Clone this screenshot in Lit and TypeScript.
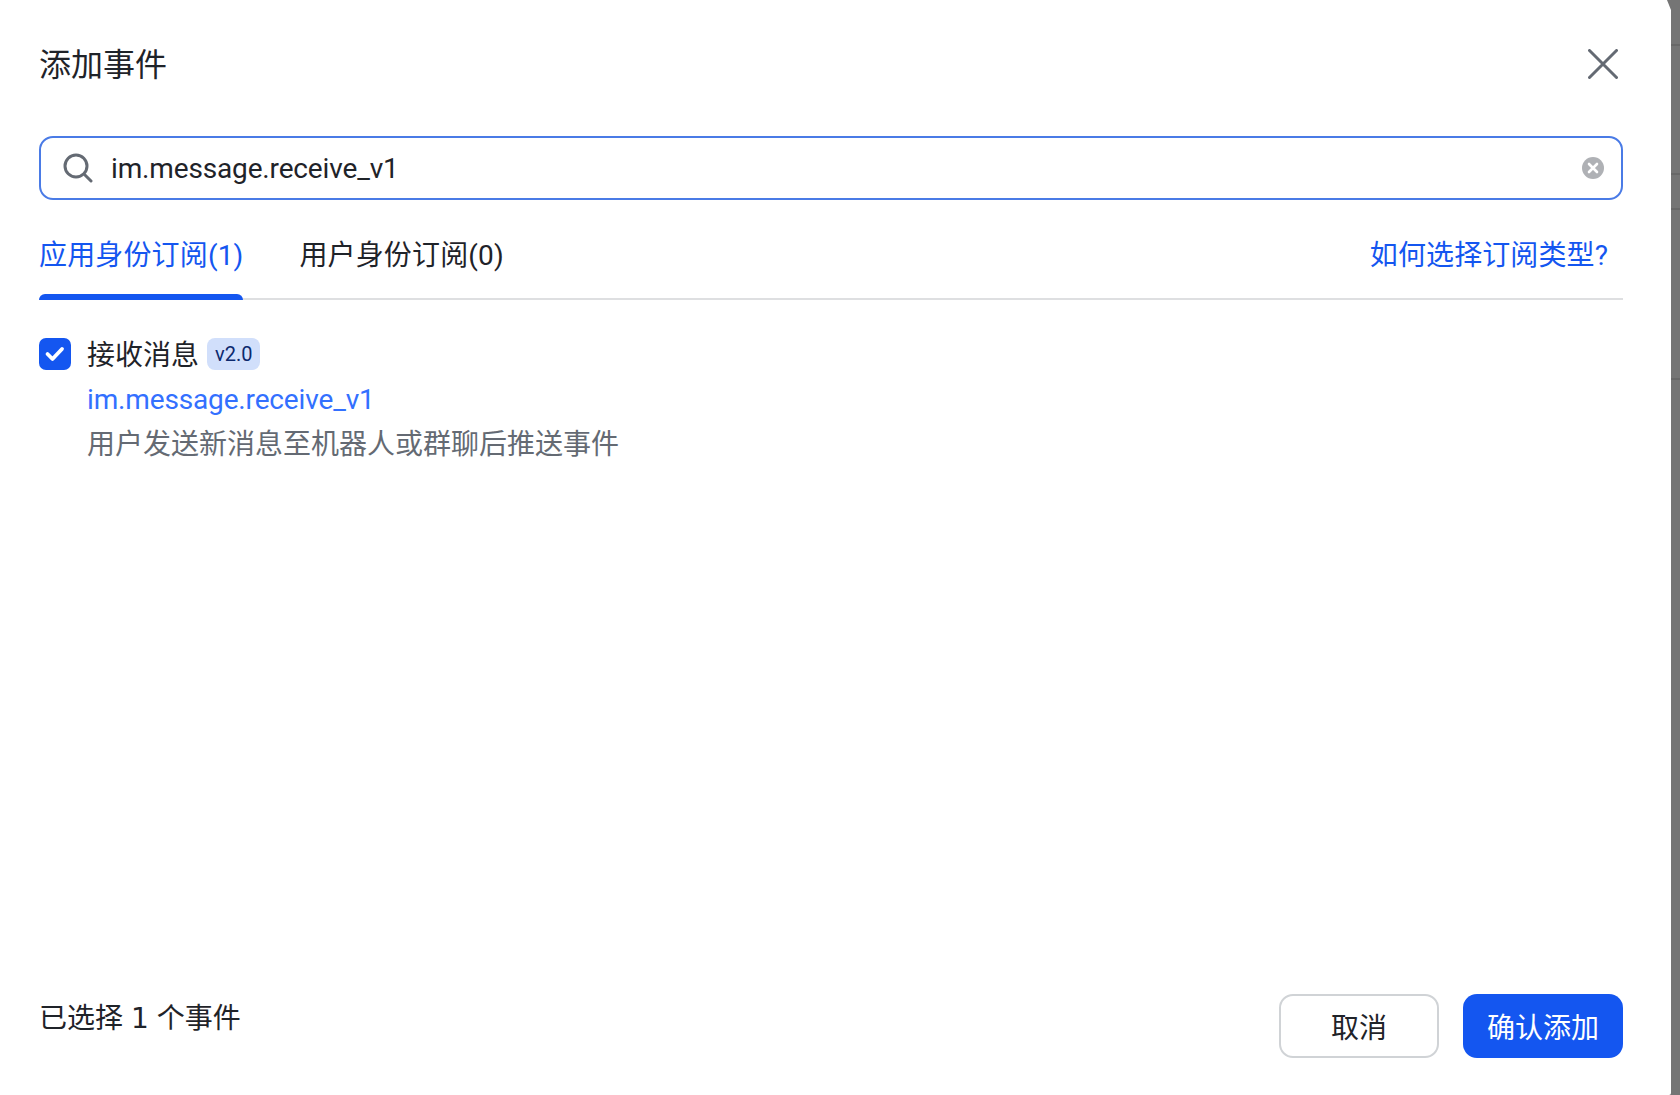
import { LitElement, html, css } from "lit";
import { customElement } from "lit/decorators.js";

@customElement("app-root")
export class AppRoot extends LitElement {
  static styles = css`
    :host { display: flex; position: relative; width: 1680px; height: 1095px; background: #757575; overflow: hidden;
      font-family: Roboto, "Noto Sans CJK SC", sans-serif; color: #1f2329; }
    .modal { width: 1671px; height: 1095px; box-sizing: border-box; background: #fff; padding: 0 48px 0 39px;
      display: flex; flex-direction: column; border-bottom-right-radius: 2px; flex: none; }
    .wedge { position: absolute; left: 1667px; top: 0; width: 4px; height: 10px; display: block; }
    .head { height: 136px; flex: none; display: flex; justify-content: space-between; align-items: flex-start; }
    .title { font-size: 32px; line-height: 44px; margin-top: 43px; }
    .close { margin: 49px 5px 0 0; width: 30px; height: 30px; display: block; }
    .search { height: 64px; flex: none; box-sizing: border-box; border: 2px solid #4a7be6; border-radius: 14px;
      display: flex; align-items: center; padding: 0 17px 0 22px; font-size: 28px; }
    .search svg.s { width: 30px; height: 30px; flex: none; margin-right: 18px; }
    .search span { flex: 1; letter-spacing: -0.15px; padding-top: 1px; }
    .search svg.c { width: 22px; height: 22px; flex: none; }
    .tabs { height: 100px; flex: none; box-sizing: border-box; border-bottom: 2px solid #dedfe1; display: flex;
      align-items: flex-start; font-size: 28px; line-height: 40px; padding-top: 36px; }
    .tab { height: 64px; margin-right: 56px; box-sizing: border-box; letter-spacing: 0.15px; }
    .tab.on { color: #1456f0; position: relative; }
    .tab.on::after { content: ""; position: absolute; left: 0; right: 0; bottom: 0; height: 6px; background: #1456f0; border-radius: 6px 6px 0 0; }
    .help { margin-left: auto; color: #1456f0; margin-right: 15px; letter-spacing: 0.1px; }
    .list { flex: 1; padding-top: 32px; }
    .row { display: flex; align-items: center; height: 44px; }
    .check { width: 32px; height: 32px; background: #1456f0; border-radius: 7px; display: flex; align-items: center; justify-content: center; margin-right: 16px; flex: none; }
    .check svg { width: 22px; height: 22px; }
    .name { font-size: 28px; line-height: 44px; margin-right: 8px; padding-top: 4px; }
    .badge { background: #d1dffb; color: #0c296e; font-size: 20px; line-height: 32px; height: 32px; padding: 0 8px; border-radius: 8px; }
    .sub { margin-left: 48px; font-size: 28px; line-height: 44px; }
    .key { color: #3370ff; margin-top: 2px; letter-spacing: -0.15px; }
    .desc { color: #646a73; margin-top: 1px; }
    .foot { height: 101px; flex: none; display: flex; align-items: flex-start; justify-content: space-between; }
    .count { font-size: 28px; line-height: 40px; margin-top: 5px; word-spacing: 1px; }
    .num { font-family: "DejaVu Sans", sans-serif; }
    .btns { display: flex; gap: 24px; }
    .btn { width: 160px; height: 64px; box-sizing: border-box; border-radius: 14px; font-size: 28px; display: flex; align-items: center; justify-content: center; }
    .cancel { border: 2px solid #d0d3d6; background: #fff; }
    .ok { background: #1456f0; color: #fff; }
    .side { flex: 1; display: flex; flex-direction: column; }
    .side i { display: block; height: 2px; background: #686868; }
    .s1 { margin-top: 44px; } .s2 { margin-top: 127px; } .s3 { margin-top: 33px; } .s4 { margin-top: 168px; }
  `;
  render() {
    return html`
      <div class="modal">
        <div class="head">
          <div class="title">添加事件</div>
          <svg class="close" viewBox="0 0 30 30"><path d="M1.5 1.5 28.5 28.5M28.5 1.5 1.5 28.5" stroke="#646a73" stroke-width="3" stroke-linecap="round" fill="none"/></svg>
        </div>
        <div class="search">
          <svg class="s" viewBox="0 0 30 30" fill="none" stroke="#646a73" stroke-width="3"><circle cx="13" cy="13" r="11"/><path d="M22 22 28 28" stroke-linecap="round"/></svg>
          <span>im.message.receive_v1</span>
          <svg class="c" viewBox="0 0 22 22"><circle cx="11" cy="11" r="11" fill="#afb1b5"/><path d="M7 7 15 15M15 7 7 15" stroke="#fff" stroke-width="2.6" stroke-linecap="round"/></svg>
        </div>
        <div class="tabs">
          <div class="tab on">应用身份订阅(1)</div>
          <div class="tab">用户身份订阅(0)</div>
          <div class="help">如何选择订阅类型?</div>
        </div>
        <div class="list">
          <div class="row">
            <div class="check"><svg viewBox="0 0 22 22"><path d="M3.5 11 8.5 16 18 6" fill="none" stroke="#fff" stroke-width="3.8" stroke-linecap="round" stroke-linejoin="round"/></svg></div>
            <div class="name">接收消息</div>
            <div class="badge">v2.0</div>
          </div>
          <div class="sub key">im.message.receive_v1</div>
          <div class="sub desc">用户发送新消息至机器人或群聊后推送事件</div>
        </div>
        <div class="foot">
          <div class="count">已选择 <span class="num">1</span> 个事件</div>
          <div class="btns">
            <div class="btn cancel">取消</div>
            <div class="btn ok">确认添加</div>
          </div>
        </div>
      </div>
      <svg class="wedge" viewBox="0 0 4 10"><path d="M0 0H4V10Z" fill="#757575"/></svg>
      <div class="side"><i class="s1"></i><i class="s2"></i><i class="s3"></i><i class="s4"></i></div>
    `;
  }
}
